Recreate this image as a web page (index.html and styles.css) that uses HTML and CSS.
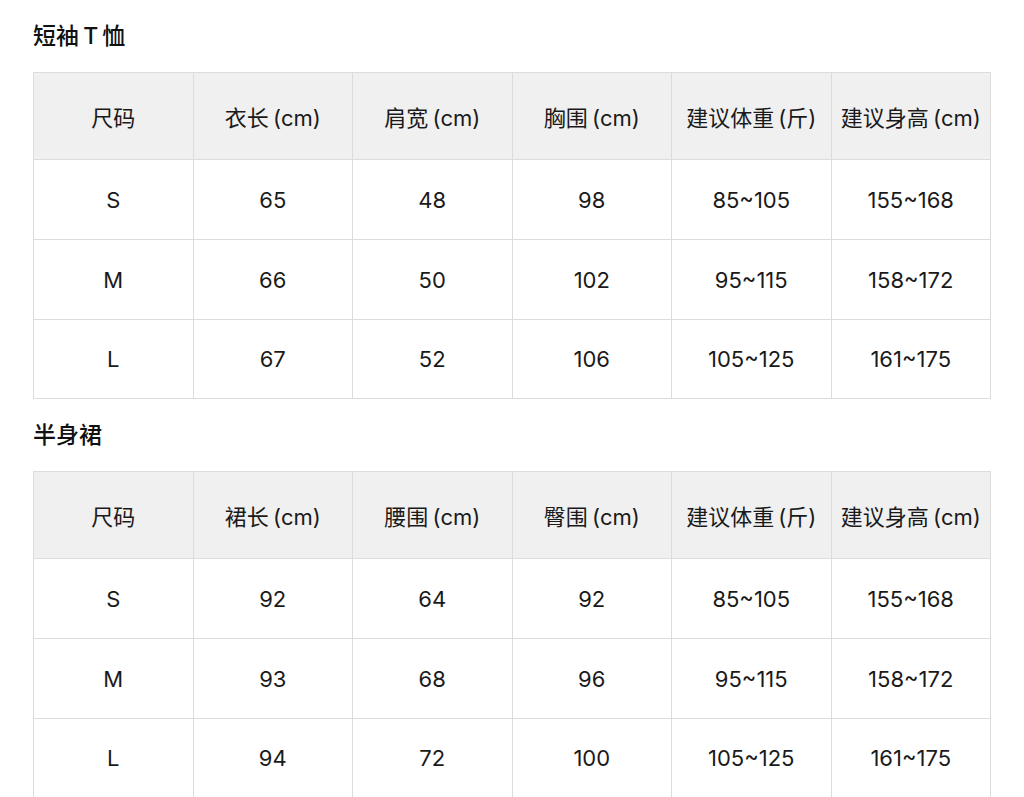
FILE: index.html
```html
<!DOCTYPE html>
<html lang="zh">
<head>
<meta charset="utf-8">
<link rel="stylesheet" href="styles.css">
</head>
<body>
<div class="page">
  <h2 class="title">短袖 T 恤</h2>
  <table class="size-table">
    <thead>
      <tr><th>尺码</th><th>衣长 (cm)</th><th>肩宽 (cm)</th><th>胸围 (cm)</th><th>建议体重 (斤)</th><th>建议身高 (cm)</th></tr>
    </thead>
    <tbody>
      <tr><td>S</td><td>65</td><td>48</td><td>98</td><td>85~105</td><td>155~168</td></tr>
      <tr><td>M</td><td>66</td><td>50</td><td>102</td><td>95~115</td><td>158~172</td></tr>
      <tr><td>L</td><td>67</td><td>52</td><td>106</td><td>105~125</td><td>161~175</td></tr>
    </tbody>
  </table>
  <h2 class="title">半身裙</h2>
  <table class="size-table">
    <thead>
      <tr><th>尺码</th><th>裙长 (cm)</th><th>腰围 (cm)</th><th>臀围 (cm)</th><th>建议体重 (斤)</th><th>建议身高 (cm)</th></tr>
    </thead>
    <tbody>
      <tr><td>S</td><td>92</td><td>64</td><td>92</td><td>85~105</td><td>155~168</td></tr>
      <tr><td>M</td><td>93</td><td>68</td><td>96</td><td>95~115</td><td>158~172</td></tr>
      <tr><td>L</td><td>94</td><td>72</td><td>100</td><td>105~125</td><td>161~175</td></tr>
    </tbody>
  </table>
</div>
</body>
</html>
```

FILE: styles.css
```css
html, body {
  margin: 0;
  padding: 0;
  background: #ffffff;
}
body {
  font-family: Inter, "Noto Sans CJK SC", sans-serif;
  color: #1a1a1a;
}
.page {
  padding: 0 33px;
  width: 958px;
}
.title {
  margin: 0;
  height: 72px;
  display: flex;
  align-items: center;
  font-size: 23px;
  font-weight: 500;
  line-height: 1;
  color: #111;
  white-space: pre;
  word-spacing: -2px;
}
.size-table {
  width: 958px;
  border-collapse: collapse;
  table-layout: fixed;
}
.size-table th,
.size-table td {
  border: 1px solid #dcdcdc;
  text-align: center;
  vertical-align: middle;
  font-size: 22px;
  padding: 0;
  color: #1a1a1a;
}
.size-table th {
  background: #f0f0f0;
  font-weight: 400;
  height: 86px;
  word-spacing: -2px;
}
.size-table td {
  height: 79px;
}
.size-table tr:last-child td {
  height: 78px;
}
```
